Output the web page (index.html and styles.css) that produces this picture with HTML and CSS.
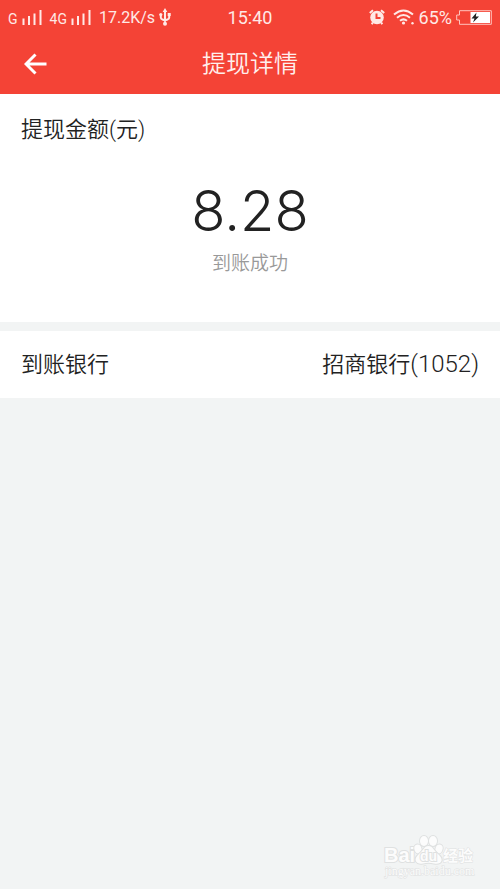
FILE: index.html
```html
<!DOCTYPE html>
<html lang="zh-CN">
<head>
<meta charset="utf-8">
<meta name="viewport" content="width=device-width, initial-scale=1">
<title>提现详情</title>
<link rel="stylesheet" href="styles.css">
</head>
<body>
<header class="top">
  <div class="status">
    <div class="status-group">
      <span class="network">G</span>
      <svg class="signal" width="20" height="15" viewBox="0 0 20 15" aria-hidden="true"><path d="M1.500 8.500V15M7 6V15M12.500 3.500V15M18.500 0V15"/></svg>
      <span class="network network-second">4G</span>
      <svg class="signal" width="20" height="15" viewBox="0 0 20 15" aria-hidden="true"><path d="M1.500 8.500V15M7 6V15M12.500 3.500V15M18.500 0V15"/></svg>
      <span class="speed">17.2K/s</span>
      <svg class="usb" width="12" height="18" viewBox="0 0 12 18" aria-hidden="true">
        <path class="line" d="M6 2.500V16M1.800 6.500V9.500Q1.800 11 3.500 11.500L6 12.500L8.500 11.500Q10.200 11 10.200 9.500V6.500"/>
        <path d="M6 0L8.300 4H3.700ZM8.700 5h3v3h-3Z"/><circle cx="1.800" cy="6.500" r="1.600"/><circle cx="6" cy="15.800" r="2"/>
      </svg>
    </div>
    <time class="clock">15:40</time>
    <div class="status-group status-right">
      <svg class="alarm" width="16" height="16" viewBox="0 0 16 16" aria-hidden="true">
        <circle cx="8" cy="8.500" r="6.800"/><path class="feet" d="M0.800 4L4 1.200M12 1.200L15.200 4M3.800 13.500L2.800 15.300M12.200 13.500L13.200 15.300"/><path class="hands" d="M7.500 4.500V9H11.500"/>
      </svg>
      <svg class="wifi" width="22" height="16" viewBox="0 0 22 16" aria-hidden="true">
        <path class="line" d="M1 5.500Q10.500 -2.500 20 5.500M4 8.800Q10.500 3.300 17 8.800M7 11.800Q10.500 9 14 11.800"/><circle cx="10.500" cy="14" r="1.600"/><circle cx="19.500" cy="14.300" r="1.200"/>
      </svg>
      <span class="percent">65%</span>
      <svg class="battery" width="36" height="15" viewBox="0 0 36 15" aria-hidden="true">
        <path class="shell" d="M3.500 .7H35.300V14.300H3.500V10H.7V5H3.500Z"/><path class="charge" d="M14.500 2H34V13H14.500Z"/><path class="bolt" d="M20.500 2.500L15.500 8.500H18.500L17 12.500L23 6.500H19.800Z"/>
      </svg>
    </div>
  </div>
  <nav class="bar">
    <button class="back" type="button" aria-label="返回">
      <svg width="24" height="22" viewBox="0 0 24 22" aria-hidden="true"><path d="M11.500 1.500L2 11L11.500 20.500M2 11H22.500"/></svg>
    </button>
    <h1 class="title">提现详情</h1>
  </nav>
</header>
<main>
  <section class="summary">
    <h2 class="label">提现金额(元)</h2>
    <p class="amount">8.28</p>
    <p class="result">到账成功</p>
  </section>
  <dl class="row">
    <dt>到账银行</dt>
    <dd>招商银行<span class="digits">(1052)</span></dd>
  </dl>
</main>
<footer class="watermark">
  <svg width="96" height="46" viewBox="0 0 96 46" role="img" aria-label="Baidu 经验 jingyan.baidu.com">
    <text class="brand" x="2" y="29">Bai</text>
    <g class="paw"><ellipse cx="36" cy="16" rx="3.500" ry="4.500" transform="rotate(-20 36 16)"/><ellipse cx="42" cy="8" rx="4" ry="5"/><ellipse cx="51" cy="8" rx="4" ry="5"/><ellipse cx="57" cy="16" rx="3.500" ry="4.500" transform="rotate(20 57 16)"/><path d="M46.500 13C42 13 41 18 37 21C30 27 35 32 41 30.500Q46.500 29 52 30.500C59 32 63 27 56 21C52 18 51 13 46.500 13Z"/></g>
    <text class="brand-inner" x="38" y="28">du</text>
    <text class="brand-cn" x="61" y="28">经验</text>
    <text class="domain" x="3" y="42">jingyan.baidu.com</text>
  </svg>
</footer>
</body>
</html>
```
FILE: styles.css
```css
* {
  box-sizing: border-box;
}

body {
  position: relative;
  min-height: 100vh;
  margin: 0;
  background: #f2f4f4;
  color: #222;
  font-family: Roboto, "Noto Sans CJK SC", sans-serif;
  font-size: 22px;
  font-weight: 350;
}

h1, h2, p, dl, dd {
  margin: 0;
  font-weight: inherit;
}

svg {
  display: block;
  flex: none;
}

.top {
  background: #f44336;
  color: #ffefed;
}

.status {
  display: grid;
  grid-template-columns: 1fr auto 1fr;
  align-items: center;
  height: 34px;
  padding: 0 8px;
  font-size: 16px;
  font-weight: 400;
  color: #ffe9e6;
}

.status-group {
  display: flex;
  align-items: center;
}

.status-right {
  justify-content: flex-end;
}

.network {
  margin-right: 4px;
  padding-top: 4px;
  font-size: 14px;
}

.network-second {
  margin-left: 8px;
}

.signal {
  fill: none;
  stroke: #ffe9e6;
  stroke-width: 2;
}

.speed {
  margin: 0 4px 0 8px;
}

.usb, .wifi {
  fill: #ffe9e6;
}

.line {
  fill: none;
  stroke: #ffe9e6;
  stroke-width: 2;
}

.clock {
  font-size: 18px;
}

.alarm {
  margin-right: 8px;
  fill: #ffe9e6;
}

.alarm .feet, .alarm .hands {
  fill: none;
  stroke: #ffe9e6;
  stroke-width: 2;
}

.alarm .hands {
  stroke: #f44336;
}

.percent {
  margin: 0 4px;
  font-size: 18px;
}

.shell {
  fill: none;
  stroke: #ffc4bd;
}

.charge {
  fill: #fff;
}

.bolt {
  fill: #222;
}

.bar {
  display: grid;
  grid-template-columns: 48px 1fr 48px;
  align-items: center;
  height: 60px;
  padding: 0 12px;
}

.back {
  display: flex;
  align-items: center;
  height: 48px;
  padding: 0 12px;
  border: 0;
  background: none;
}

.back svg {
  fill: none;
  stroke: #fff;
  stroke-width: 3;
}

.title {
  font-size: 24px;
  line-height: 32px;
  text-align: center;
}

.summary {
  padding: 20px 21px 42px;
  background: #fff;
}

.label {
  font-size: 22px;
  line-height: 32px;
}

.amount {
  padding-top: 30px;
  font-family: Inter, sans-serif;
  font-size: 56px;
  font-weight: 300;
  line-height: 70px;
  text-align: center;
}

.result {
  padding-top: 2px;
  color: #999;
  font-size: 19px;
  line-height: 32px;
  text-align: center;
}

.row {
  display: flex;
  align-items: center;
  justify-content: space-between;
  margin-top: 9px;
  padding: 17px 21px;
  background: #fff;
  line-height: 32px;
}

.digits {
  font-size: 24px;
}

.watermark {
  position: absolute;
  right: 22px;
  bottom: 10px;
}

.watermark text, .paw {
  fill: #fcfcfc;
  stroke: #dfe1e1;
  stroke-width: 2;
  paint-order: stroke;
}

.watermark .brand {
  font: 700 20px "Liberation Sans", sans-serif;
}

.watermark .brand-inner {
  font: 700 14px "Liberation Sans", sans-serif;
}

.watermark .brand-cn {
  font: 700 15px "Noto Sans CJK SC", sans-serif;
  stroke-width: 1;
}

.watermark .domain {
  font: 400 12px "Liberation Serif", serif;
  stroke-width: 1;
}
```
